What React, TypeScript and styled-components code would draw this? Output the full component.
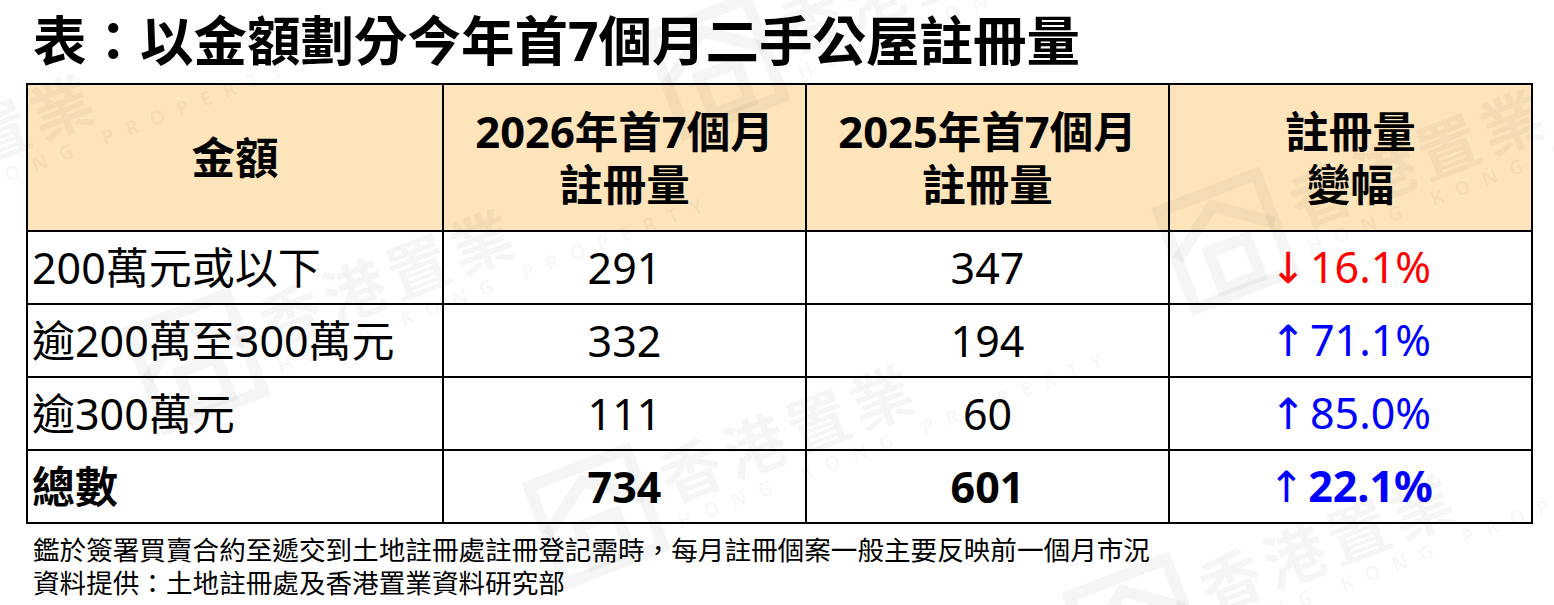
import styled, { createGlobalStyle } from 'styled-components'

const GlobalStyle = createGlobalStyle`
    html, body {
        margin: 0;
        padding: 0;
        background: #ffffff;
    }
    body {
        font-family: "Noto Sans", "Noto Sans CJK TC", sans-serif;
        color: #000000;
    }
`

const Page = styled.div`
    position: relative;
    width: 1554px;
    height: 605px;
    overflow: hidden;
    padding: 11px 0 0 26px;
    box-sizing: border-box;
`

const Title = styled.h1`
    margin: 0 0 12px 7px;
    font-size: 53.5px;
    line-height: 60px;
    font-weight: 700;
    font-family: "Noto Sans", "Noto Sans CJK TC", sans-serif;
`

const Table = styled.div`
    display: grid;
    grid-template-columns: 416px 363px 363px 363px;
    grid-template-rows: 147px repeat(4, 73px);
    width: 1507px;
    box-sizing: border-box;
    border-top: 2px solid #000;
    border-left: 2px solid #000;
`

const Cell = styled.div<{ $head?: boolean; $left?: boolean; $bold?: boolean; $tone?: 'up' | 'down' }>`
    box-sizing: border-box;
    border-right: 2px solid #000;
    border-bottom: 2px solid #000;
    background: ${p => (p.$head ? '#fde4bb' : '#ffffff')};
    display: flex;
    flex-direction: column;
    align-items: ${p => (p.$left ? 'flex-start' : 'center')};
    justify-content: center;
    padding-left: ${p => (p.$left ? '4px' : '0')};
    font-size: ${p => (p.$head ? '43.5px' : '43px')};
    line-height: ${p => (p.$head ? '53px' : '56px')};
    font-weight: ${p => (p.$head || p.$bold ? 700 : 400)};
    text-align: center;
    color: ${p => (p.$tone === 'up' ? '#0000ff' : p.$tone === 'down' ? '#ff0000' : '#000000')};
`

const Arrow = styled.span`
    font-family: "DejaVu Sans", sans-serif;
    font-weight: 400;
    margin-right: 4px;
`

const Notes = styled.div`
    margin: 8px 0 0 7px;
    font-size: 26.6px;
    line-height: 33px;
    font-family: "Noto Sans CJK TC", sans-serif;
    font-weight: 400;
`

const Watermark = styled.div`
    position: absolute;
    display: flex;
    align-items: center;
    gap: 14px;
    transform: rotate(-21deg);
    transform-origin: center;
    color: rgba(0, 0, 0, 0.04);
    pointer-events: none;
    white-space: nowrap;
`

const MarkText = styled.div`
    display: flex;
    flex-direction: column;
    font-family: "Noto Sans CJK TC", sans-serif;
`

const MarkName = styled.span`
    font-size: 62px;
    line-height: 70px;
    font-weight: 700;
    letter-spacing: 6px;
`

const MarkSub = styled.span`
    font-family: "Noto Sans", sans-serif;
    font-size: 20px;
    line-height: 24px;
    font-weight: 700;
    letter-spacing: 13px;
`

interface RowData {
    label: string
    y2026: string
    y2025: string
    change: string
    up: boolean
    bold?: boolean
}

const rows: RowData[] = [
    { label: '200萬元或以下', y2026: '291', y2025: '347', change: '16.1%', up: false },
    { label: '逾200萬至300萬元', y2026: '332', y2025: '194', change: '71.1%', up: true },
    { label: '逾300萬元', y2026: '111', y2025: '60', change: '85.0%', up: true },
    { label: '總數', y2026: '734', y2025: '601', change: '22.1%', up: true, bold: true },
]

// 浮水印位置
const marks = [
    { x: -300, y: 80 },
    { x: 120, y: 215 },
    { x: 640, y: -80 },
    { x: 520, y: 370 },
    { x: 1150, y: 95 },
    { x: 1060, y: 480 },
]

const HouseLogo = () => (
    <svg width="120" height="120" viewBox="0 0 120 120" fill="none" stroke="currentColor" strokeWidth="12">
        <rect x="8" y="8" width="104" height="104" />
        <polyline points="8,60 60,22 112,60" />
        <rect x="40" y="64" width="40" height="40" />
    </svg>
)

const App = () => {
    return <Page>
        <GlobalStyle />
        <Title>表：以金額劃分今年首7個月二手公屋註冊量</Title>
        <Table>
            <Cell $head>金額</Cell>
            <Cell $head><span>2026年首7個月</span><span>註冊量</span></Cell>
            <Cell $head><span>2025年首7個月</span><span>註冊量</span></Cell>
            <Cell $head><span>註冊量</span><span>變幅</span></Cell>
            {
                rows.map(row => [
                    <Cell key={row.label + 'a'} $left $bold={row.bold}>{row.label}</Cell>,
                    <Cell key={row.label + 'b'} $bold={row.bold}>{row.y2026}</Cell>,
                    <Cell key={row.label + 'c'} $bold={row.bold}>{row.y2025}</Cell>,
                    <Cell key={row.label + 'd'} $bold={row.bold} $tone={row.up ? 'up' : 'down'}>
                        <span><Arrow>{row.up ? '↑' : '↓'}</Arrow>{row.change}</span>
                    </Cell>,
                ])
            }
        </Table>
        <Notes>
            <div>鑑於簽署買賣合約至遞交到土地註冊處註冊登記需時，每月註冊個案一般主要反映前一個月市況</div>
            <div>資料提供：土地註冊處及香港置業資料研究部</div>
        </Notes>
        {
            marks.map((m, i) => (
                <Watermark key={i} style={{ left: m.x, top: m.y }}>
                    <HouseLogo />
                    <MarkText>
                        <MarkName>香港置業</MarkName>
                        <MarkSub>HONG KONG PROPERTY</MarkSub>
                    </MarkText>
                </Watermark>
            ))
        }
    </Page>
}
export default App
